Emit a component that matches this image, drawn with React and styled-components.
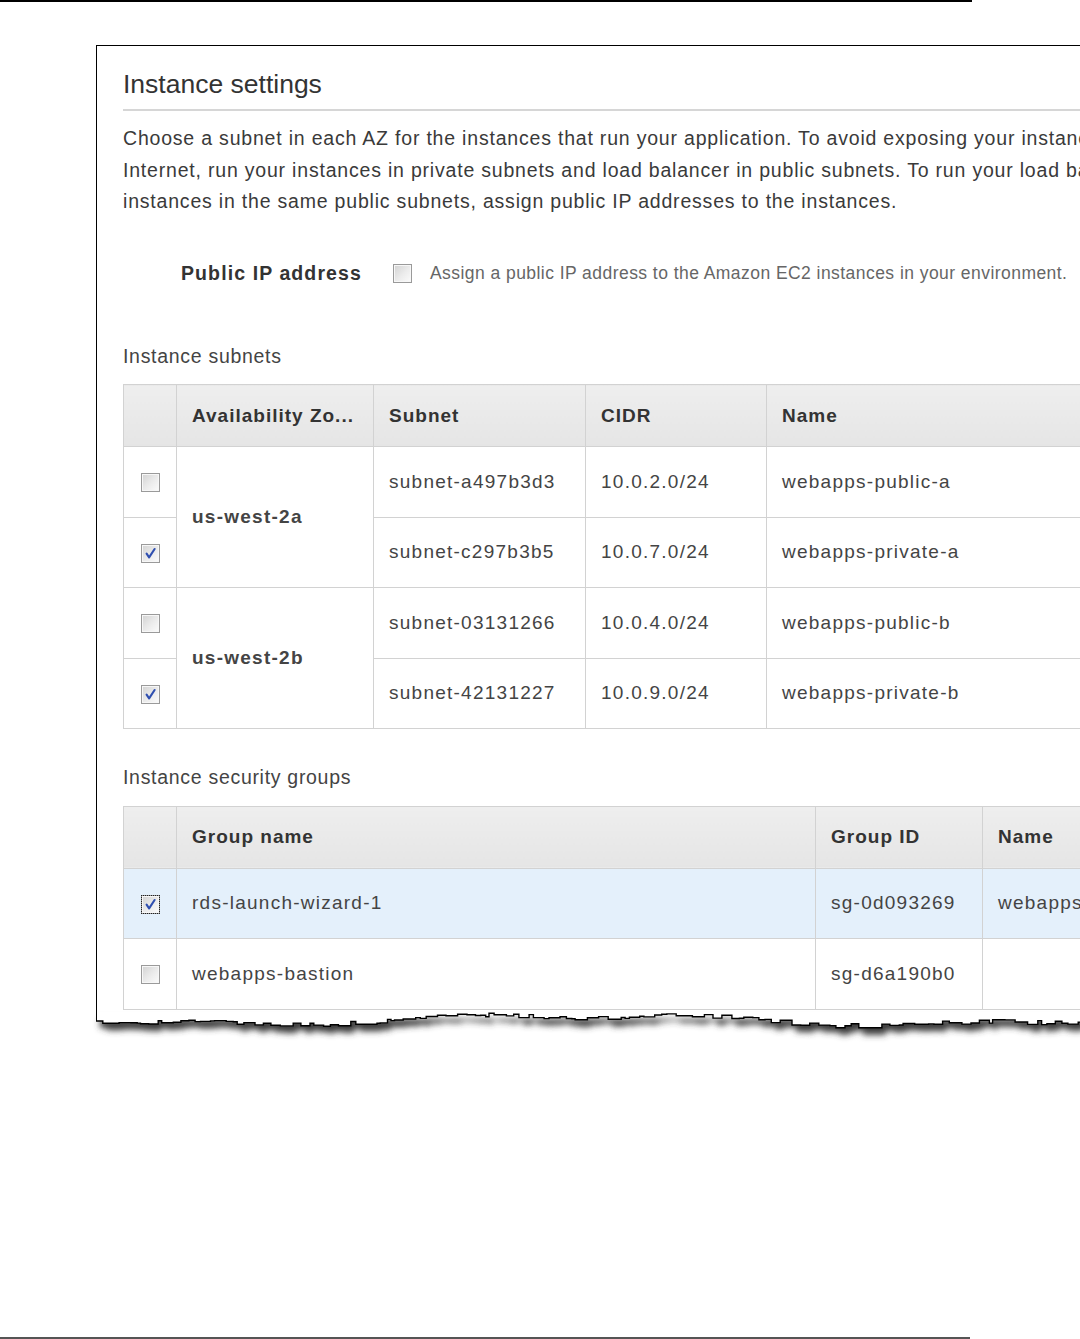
import React, { useMemo } from "react";
import styled, { createGlobalStyle } from "styled-components";

const Global = createGlobalStyle`
  html, body { margin: 0; padding: 0; background: #ffffff; }
  body { font-family: "Liberation Sans", Arial, sans-serif; }
`;

const Page = styled.div`
  width: 1080px;
  height: 1339px;
  overflow: hidden;
  display: flex;
  flex-direction: column;
  background: #fff;
`;

const Rule = styled.div`
  flex: none;
  width: ${(p) => p.$w}px;
  height: 2px;
  background: ${(p) => p.$color};
`;

const Spacer = styled.div`
  flex: 1;
`;

const Shot = styled.div`
  flex: none;
  margin: 43px 0 0 96px;
  width: 1080px;
`;

const Frame = styled.div`
  border-top: 1px solid #000;
  border-left: 1px solid #000;
  background: #fff;
  padding: 22px 0 2px 26px;
`;

const Title = styled.h2`
  margin: 0;
  font-size: 26.5px;
  line-height: 32px;
  font-weight: normal;
  color: #333;
  padding-bottom: 9px;
  border-bottom: 2px solid #d6d6d6;
`;

const Paragraph = styled.p`
  margin: 12px 0 0;
  font-size: 19.5px;
  line-height: 31.5px;
  letter-spacing: 0.8px;
  color: #3a3a3a;
  white-space: nowrap;
`;

const OptionRow = styled.div`
  display: flex;
  align-items: center;
  margin-top: 40px;
  padding-left: 58px;
  height: 32px;
`;

const OptionLabel = styled.span`
  font-size: 19.5px;
  font-weight: bold;
  letter-spacing: 1.1px;
  color: #333;
  margin-right: 31px;
`;

const OptionHint = styled.span`
  font-size: 17.5px;
  letter-spacing: 0.45px;
  color: #666;
  margin-left: 18px;
  white-space: nowrap;
`;

const SectionLabel = styled.div`
  margin-top: ${(p) => p.$top}px;
  font-size: 19.5px;
  line-height: 31.5px;
  letter-spacing: 0.7px;
  color: #444;
`;

const Table = styled.table`
  margin-top: 12px;
  border-collapse: collapse;
  table-layout: fixed;
  width: ${(p) => p.$w}px;
`;

const Th = styled.th`
  height: 61px;
  padding: 0 15px;
  text-align: left;
  font-size: 19px;
  font-weight: bold;
  letter-spacing: 1px;
  color: #333;
  background: linear-gradient(#eeeeee, #e5e5e5);
  border: 1px solid #d2d2d2;
  white-space: nowrap;
  overflow: hidden;
`;

const Tr = styled.tr`
  background: ${(p) => (p.$selected ? "#e4f0fb" : "#fff")};
`;

const Td = styled.td`
  height: 69.5px;
  padding: 0 15px;
  font-size: 19px;
  letter-spacing: 1.25px;
  color: #444;
  font-weight: ${(p) => (p.$bold ? "bold" : "normal")};
  text-align: ${(p) => (p.$center ? "center" : "left")};
  border: 1px solid #d2d2d2;
  white-space: nowrap;
  overflow: hidden;
  vertical-align: middle;
`;

const Box = styled.span`
  display: inline-flex;
  align-items: center;
  justify-content: center;
  box-sizing: border-box;
  width: 19px;
  height: 19px;
  border: 1px solid #9a9a9a;
  box-shadow: inset 0 0 0 1px #f7f7f7;
  background: linear-gradient(135deg, #d2d2d2 0%, #ececec 55%, #fbfbfb 100%);
  outline: ${(p) => (p.$focus ? "1px dotted #222" : "none")};
  outline-offset: -1px;
  vertical-align: middle;
`;

function Checkbox({ checked, focus }) {
  return (
    <Box $focus={focus}>
      {checked && (
        <svg width="13" height="13" viewBox="0 0 13 13">
          <path d="M2.6 6.6 L5.1 10.3 L10.6 2" fill="none" stroke="#2f4fb0" strokeWidth="2.1" strokeLinejoin="round" strokeLinecap="round" />
        </svg>
      )}
    </Box>
  );
}

const TearSvg = styled.svg`
  display: block;
  flex: none;
  overflow: visible;
`;

function makeTear(width, seed) {
  let s = seed;
  const rnd = () => {
    s = (s * 16807) % 2147483647;
    return s / 2147483647;
  };
  const pts = [];
  let x = 0;
  let y = 9;
  pts.push([0, 9]);
  while (x < width) {
    x += 3 + rnd() * 10;
    const base = 8 + 4.5 * Math.sin(x / 110 + 0.4) + 2.2 * Math.sin(x / 41 + 2.3);
    const ny = Math.max(0.5, Math.min(17, base + (rnd() - 0.5) * 4.5));
    pts.push([x, y]);
    pts.push([x, ny]);
    y = ny;
  }
  return pts;
}

function Tear() {
  const W = 1080;
  const pts = useMemo(() => makeTear(W, 48271), []);
  const edge = pts.map(([x, y]) => `${x.toFixed(1)},${y.toFixed(1)}`).join(" ");
  const paper = `0,0 ${W},0 ${edge.split(" ").reverse().join(" ")}`;
  return (
    <TearSvg width={W} height="40" viewBox={`0 0 ${W} 40`}>
      <defs>
        <filter id="tearShadow" x="-5%" y="-50%" width="110%" height="300%">
          <feGaussianBlur stdDeviation="3" />
        </filter>
      </defs>
      <polygon points={paper} transform="translate(4 7)" fill="#3a3a3a" filter="url(#tearShadow)" />
      <polygon points={paper} fill="#fff" />
      <polyline points={edge} fill="none" stroke="#000" strokeWidth="1.4" />
      <line x1="0.5" y1="0" x2="0.5" y2={pts[0][1]} stroke="#000" strokeWidth="1" />
    </TearSvg>
  );
}

const subnets = [
  { az: "us-west-2a", rows: [
    { checked: false, id: "subnet-a497b3d3", cidr: "10.0.2.0/24", name: "webapps-public-a" },
    { checked: true, id: "subnet-c297b3b5", cidr: "10.0.7.0/24", name: "webapps-private-a" },
  ] },
  { az: "us-west-2b", rows: [
    { checked: false, id: "subnet-03131266", cidr: "10.0.4.0/24", name: "webapps-public-b" },
    { checked: true, id: "subnet-42131227", cidr: "10.0.9.0/24", name: "webapps-private-b" },
  ] },
];

const groups = [
  { checked: true, focus: true, name: "rds-launch-wizard-1", id: "sg-0d093269", tag: "webapps", selected: true },
  { checked: false, focus: false, name: "webapps-bastion", id: "sg-d6a190b0", tag: "", selected: false },
];

export default function App() {
  return (
    <Page>
      <Global />
      <Rule $w={972} $color="#000" />
      <Shot>
        <Frame>
          <Title>Instance settings</Title>
          <Paragraph>
            Choose a subnet in each AZ for the instances that run your application. To avoid exposing your instances to the
            <br />
            Internet, run your instances in private subnets and load balancer in public subnets. To run your load balancer and
            <br />
            instances in the same public subnets, assign public IP addresses to the instances.
          </Paragraph>
          <OptionRow>
            <OptionLabel>Public IP address</OptionLabel>
            <Checkbox />
            <OptionHint>Assign a public IP address to the Amazon EC2 instances in your environment.</OptionHint>
          </OptionRow>

          <SectionLabel $top={51}>Instance subnets</SectionLabel>
          <Table $w={1043}>
            <colgroup>
              <col style={{ width: 53 }} />
              <col style={{ width: 197 }} />
              <col style={{ width: 212 }} />
              <col style={{ width: 181 }} />
              <col style={{ width: 400 }} />
            </colgroup>
            <thead>
              <tr>
                <Th />
                <Th>Availability Zo...</Th>
                <Th>Subnet</Th>
                <Th>CIDR</Th>
                <Th>Name</Th>
              </tr>
            </thead>
            <tbody>
              {subnets.map((zone) =>
                zone.rows.map((r, i) => (
                  <Tr key={r.id}>
                    <Td $center>
                      <Checkbox checked={r.checked} />
                    </Td>
                    {i === 0 && (
                      <Td rowSpan={2} $bold>
                        {zone.az}
                      </Td>
                    )}
                    <Td>{r.id}</Td>
                    <Td>{r.cidr}</Td>
                    <Td>{r.name}</Td>
                  </Tr>
                ))
              )}
            </tbody>
          </Table>

          <SectionLabel $top={33}>Instance security groups</SectionLabel>
          <Table $w={1043}>
            <colgroup>
              <col style={{ width: 53 }} />
              <col style={{ width: 639 }} />
              <col style={{ width: 167 }} />
              <col style={{ width: 184 }} />
            </colgroup>
            <thead>
              <tr>
                <Th />
                <Th>Group name</Th>
                <Th>Group ID</Th>
                <Th>Name</Th>
              </tr>
            </thead>
            <tbody>
              {groups.map((g) => (
                <Tr key={g.id} $selected={g.selected}>
                  <Td $center>
                    <Checkbox checked={g.checked} focus={g.focus} />
                  </Td>
                  <Td>{g.name}</Td>
                  <Td>{g.id}</Td>
                  <Td>{g.tag}</Td>
                </Tr>
              ))}
            </tbody>
          </Table>
        </Frame>
        <Tear />
      </Shot>
      <Spacer />
      <Rule $w={970} $color="#555" />
    </Page>
  );
}
